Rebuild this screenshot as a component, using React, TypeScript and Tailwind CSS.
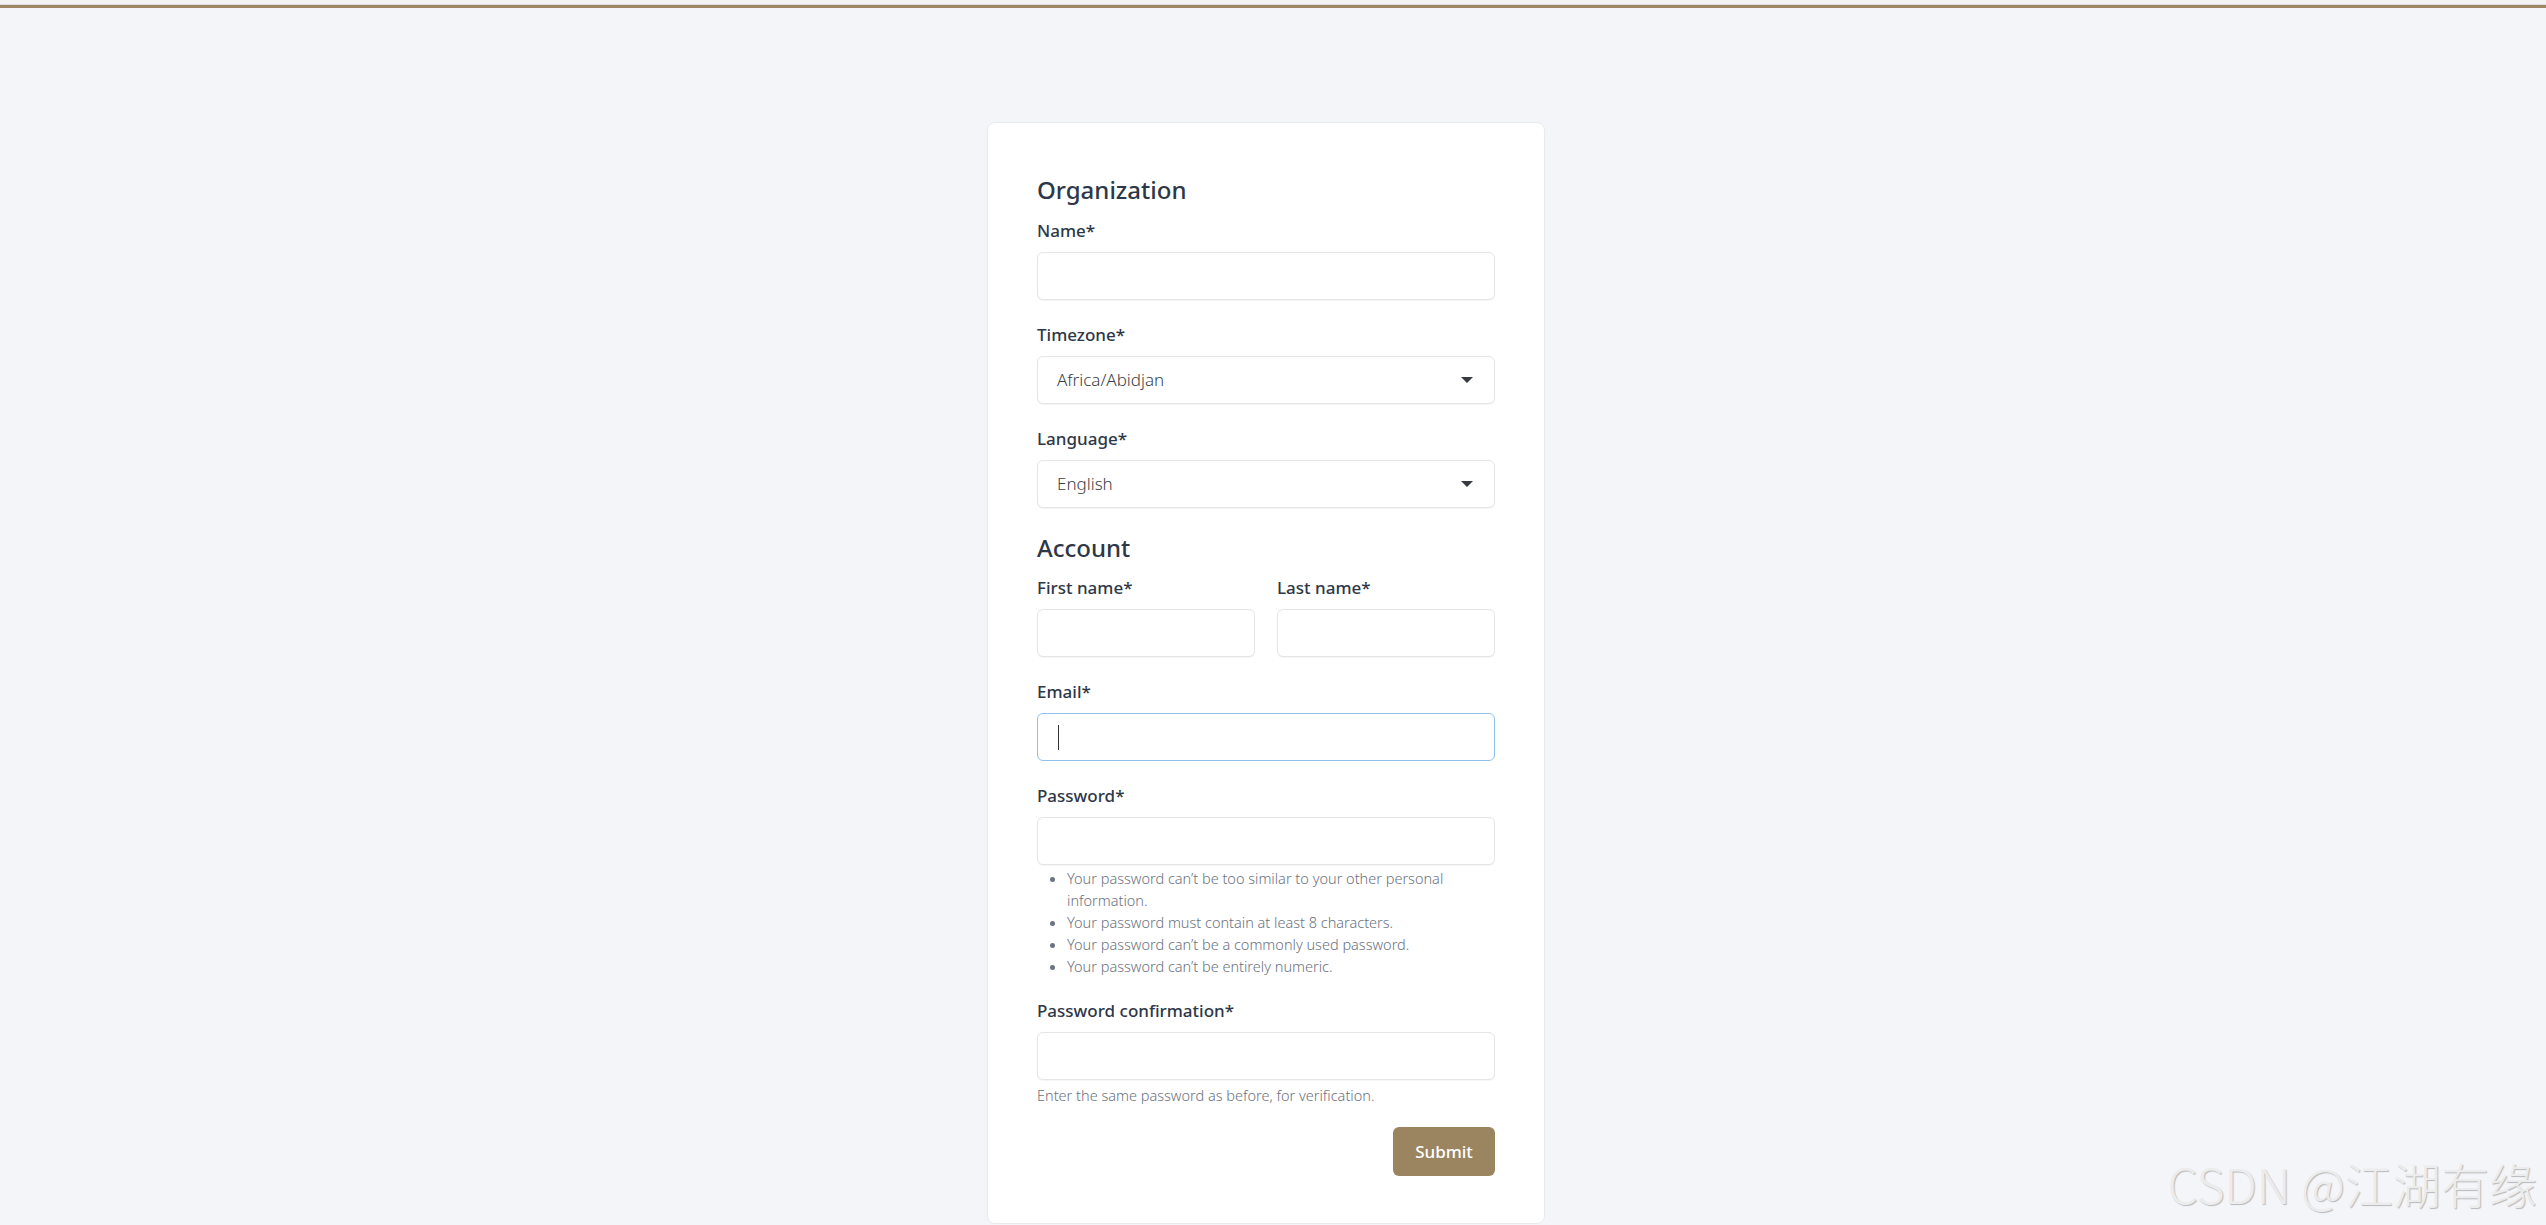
import React from "react";

const labelCls =
  "block h-6 leading-6 text-[17px] font-medium text-[#2d3748] mb-[9px]";
const inputCls =
  "block w-full h-[48px] rounded-md border border-[#e3e5e8] bg-white shadow-[0_1px_1px_rgba(0,0,0,0.04)]";

const passwordHints = [
  "Your password can’t be too similar to your other personal information.",
  "Your password must contain at least 8 characters.",
  "Your password can’t be a commonly used password.",
  "Your password can’t be entirely numeric.",
];

const Caret = () => (
  <svg width="12" height="6" viewBox="0 0 12 6" className="shrink-0">
    <polygon points="0,0 12,0 6,6" fill="#343a40" />
  </svg>
);

const Field: React.FC<{ label: string; className?: string; children?: React.ReactNode }> = ({
  label,
  className = "",
  children,
}) => (
  <div className={className}>
    <label className={labelCls}>{label}*</label>
    {children ?? <div className={inputCls} />}
  </div>
);

const SelectBox: React.FC<{ value: string }> = ({ value }) => (
  <div
    className={`${inputCls} flex items-center justify-between pl-[19px] pr-[21px] text-[17px] font-light text-[#3a3f47]`}
  >
    <span>{value}</span>
    <Caret />
  </div>
);

export default function App() {
  return (
    <div
      className="relative min-h-[1225px] bg-[#f4f5f9] overflow-hidden"
      style={{ fontFamily: '"Noto Sans", "Open Sans", sans-serif' }}
    >
      {/* top stripe */}
      <div className="h-[4px] bg-[#f3f3f3]" />
      <div className="h-px bg-[#dedede]" />
      <div className="h-[3px] bg-[#9c8762]" />

      <div className="flex justify-center pr-[14px] pt-[114px]">
        <div className="w-[558px] rounded-lg border border-[#e8eaee] bg-white px-[49px] pt-[51px] pb-[47px]">
          {/* Organization */}
          <h2 className="h-8 leading-8 text-[24px] font-medium text-[#2d3748]">
            Organization
          </h2>
          <Field label="Name" className="mt-[13px]" />
          <Field label="Timezone" className="mt-[23px]">
            <SelectBox value="Africa/Abidjan" />
          </Field>
          <Field label="Language" className="mt-[23px]">
            <SelectBox value="English" />
          </Field>

          {/* Account */}
          <h2 className="mt-[24px] h-8 leading-8 text-[24px] font-medium text-[#2d3748]">
            Account
          </h2>
          <div className="mt-[12px] grid grid-cols-2 gap-[22px]">
            <Field label="First name" />
            <Field label="Last name" />
          </div>
          <Field label="Email" className="mt-[23px]">
            <div className="flex h-[48px] w-full items-center rounded-md border border-[#8fc0ee] bg-white pl-[20px]">
              <div className="h-[25px] w-px bg-[#333]" />
            </div>
          </Field>
          <Field label="Password" className="mt-[23px]" />
          <ul className="mt-[2px] list-disc pl-[30px] text-[14.5px] leading-[22px] font-light text-[#6b7280] marker:text-[#6b7280]">
            {passwordHints.map((h) => (
              <li key={h}>{h}</li>
            ))}
          </ul>

          <Field label="Password confirmation" className="mt-[22px]" />
          <p className="mt-[4px] text-[14.5px] leading-[22px] font-light text-[#6b7280]">
            Enter the same password as before, for verification.
          </p>

          <div className="mt-[21px] flex justify-end">
            <button className="h-[49px] w-[102px] rounded-md bg-[#9b8560] text-[17px] font-medium text-white">
              Submit
            </button>
          </div>
        </div>
      </div>

      {/* watermark */}
      <span
        className="absolute right-[9px] top-[1159px] text-[48px] leading-[48px] font-light text-[#ececec] [text-shadow:1px_1px_1px_rgba(0,0,0,0.25)]"
        style={{ fontFamily: '"Noto Sans CJK SC", sans-serif' }}
      >
        CSDN @江湖有缘
      </span>
    </div>
  );
}
